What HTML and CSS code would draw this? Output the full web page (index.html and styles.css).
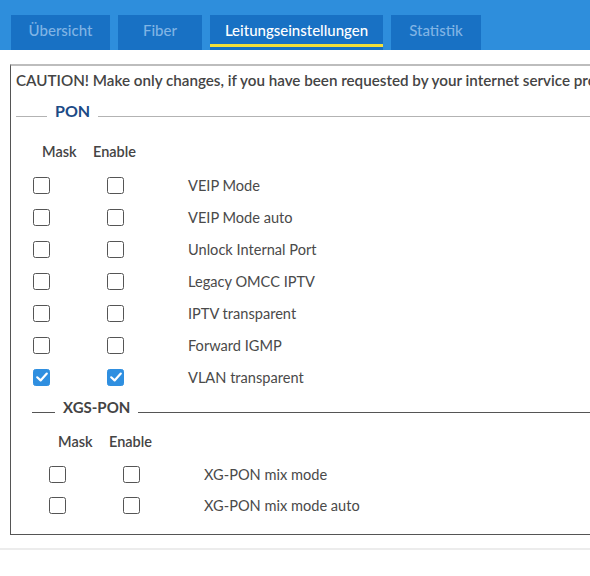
FILE: index.html
```html
<!DOCTYPE html>
<html lang="de">
<head>
<meta charset="utf-8">
<title>Leitungseinstellungen</title>
<link rel="stylesheet" href="styles.css">
</head>
<body>
<div class="header">
  <div class="tab t1">Übersicht</div>
  <div class="tab t2">Fiber</div>
  <div class="tab t3 active">Leitungseinstellungen</div>
  <div class="tab t4">Statistik</div>
</div>
<div class="main">
  <div class="box">
    <div class="caution">CAUTION! Make only changes, if you have been requested by your internet service provider to do so.</div>
    <div class="section pon">
      <div class="legend"><span class="legend-text">PON</span></div>
      <div class="colhead"><span class="h-mask">Mask</span><span class="h-enable">Enable</span></div>
      <div class="row"><span class="cb"></span><span class="cb cb2"></span><span class="label">VEIP Mode</span></div>
      <div class="row"><span class="cb"></span><span class="cb cb2"></span><span class="label">VEIP Mode auto</span></div>
      <div class="row"><span class="cb"></span><span class="cb cb2"></span><span class="label">Unlock Internal Port</span></div>
      <div class="row"><span class="cb"></span><span class="cb cb2"></span><span class="label">Legacy OMCC IPTV</span></div>
      <div class="row"><span class="cb"></span><span class="cb cb2"></span><span class="label">IPTV transparent</span></div>
      <div class="row"><span class="cb"></span><span class="cb cb2"></span><span class="label">Forward IGMP</span></div>
      <div class="row"><span class="cb checked"><svg viewBox="0 0 18 18" width="18" height="18"><path d="M4.2 9.3 L7.6 12.4 L13.8 5.6" fill="none" stroke="#fff" stroke-width="2.2" stroke-linecap="round" stroke-linejoin="round"/></svg></span><span class="cb cb2 checked"><svg viewBox="0 0 18 18" width="18" height="18"><path d="M4.2 9.3 L7.6 12.4 L13.8 5.6" fill="none" stroke="#fff" stroke-width="2.2" stroke-linecap="round" stroke-linejoin="round"/></svg></span><span class="label">VLAN transparent</span></div>
      <div class="section xgs">
        <div class="legend"><span class="legend-text">XGS-PON</span></div>
        <div class="colhead"><span class="h-mask">Mask</span><span class="h-enable">Enable</span></div>
        <div class="row"><span class="cb"></span><span class="cb cb2"></span><span class="label">XG-PON mix mode</span></div>
        <div class="row"><span class="cb"></span><span class="cb cb2"></span><span class="label">XG-PON mix mode auto</span></div>
      </div>
    </div>
  </div>
</div>
<div class="separator"></div>
</body>
</html>
```

FILE: styles.css
```css
html, body {
  margin: 0;
  padding: 0;
  background: #fff;
  overflow: hidden;
}
body {
  font-family: Lato, "Liberation Sans", sans-serif;
  color: #444;
  width: 590px;
}
.header {
  height: 50px;
  background: #2e8edc;
  box-sizing: border-box;
  padding: 15px 0 0 11px;
  display: flex;
  gap: 8px;
}
.tab {
  height: 35px;
  box-sizing: border-box;
  padding-bottom: 4px;
  background: #1871c4;
  color: #80b4e4;
  font-size: 15px;
  font-weight: 500;
  line-height: 31px;
  text-align: center;
}
.t1 { width: 99px; }
.t2 { width: 84px; }
.t3 { width: 173px; }
.t4 { width: 90px; }
.tab.active {
  color: #fff;
  box-shadow: inset 0 -3px #1871c4, inset 0 -6px #f2df3a;
}
.main {
  padding: 14px 0 0 10px;
  overflow: hidden;
}
.box {
  width: 900px;
  border-top: 2px solid #bdbdbd;
  border-left: 1px solid #555;
  border-bottom: 1px solid #555;
  padding: 4px 0 13px 5px;
}
.caution {
  font-size: 15.2px;
  font-weight: 600;
  line-height: 20px;
  white-space: nowrap;
  color: #444;
}
.section {
  margin-top: 11px;
}
.legend {
  display: flex;
  align-items: flex-end;
  height: 20px;
}
.legend::before,
.legend::after {
  content: "";
  height: 0;
  border-top: 1px solid #b3b3b3;
  margin-bottom: 4px;
}
.legend::before { width: 31px; }
.legend::after { flex: 1; }
.legend-text {
  padding: 0 8px;
  line-height: 20px;
  font-size: 16px;
  font-weight: 700;
  color: #1c4a86;
}
.colhead {
  margin-top: 21px;
  padding-left: 26px;
  display: flex;
  font-size: 14.5px;
  font-weight: 600;
  line-height: 20px;
  color: #444;
}
.h-mask { width: 51px; }
.pon > .colhead { margin-bottom: 7px; }
.row {
  height: 32px;
  display: flex;
  align-items: center;
  padding-left: 17px;
}
.cb {
  width: 17px;
  height: 17px;
  box-sizing: border-box;
  border: 1.6px solid #555;
  border-radius: 2.5px;
  flex: none;
  display: flex;
  align-items: center;
  justify-content: center;
}
.cb svg { display: block; flex: none; }
.cb.checked {
  background: #2f8fe0;
  border-color: #2f8fe0;
}
.cb2 { margin-left: 57px; }
.label {
  margin-left: 64px;
  padding-top: 1px;
  font-size: 14.6px;
  line-height: 20px;
  color: #4a4a4a;
  white-space: nowrap;
}
.xgs {
  margin-top: 4px;
  margin-left: 16px;
}
.xgs .legend::before { width: 23px; }
.xgs .legend::before,
.xgs .legend::after { border-top-color: #555; }
.xgs .legend-text {
  font-size: 15px;
  color: #444;
}
.xgs > .colhead { margin-top: 15px; margin-bottom: 7px; }
.xgs .row { height: 31px; }
.separator {
  margin-top: 13px;
  height: 2px;
  background: #ececec;
}
```
